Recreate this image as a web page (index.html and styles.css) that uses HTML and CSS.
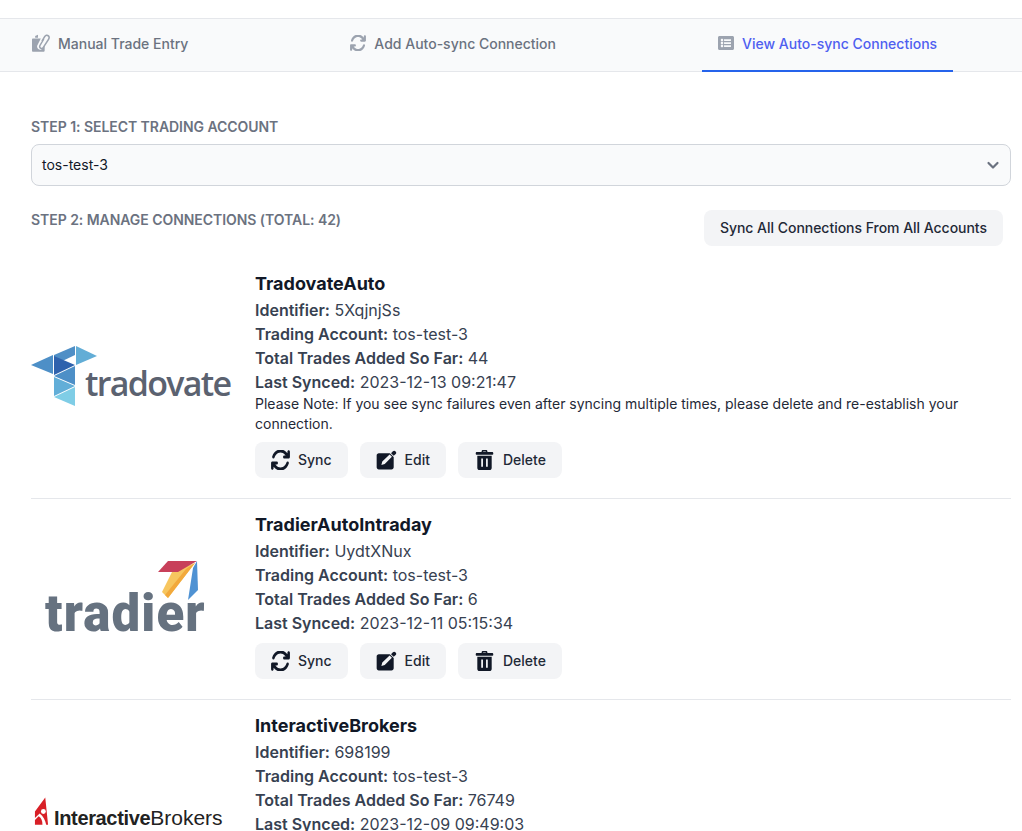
FILE: index.html
```html
<!DOCTYPE html>
<html lang="en">
<head>
    <meta charset="UTF-8">
    <meta name="viewport" content="width=device-width, initial-scale=1.0">
    <title>Auto-sync Connections</title>
    <link rel="stylesheet" href="styles.css">
</head>
<body>
    <svg class="icon-defs" aria-hidden="true">
        <symbol id="i-sync" viewBox="14 44 484 424" preserveAspectRatio="none"><path d="M105.1 202.6c7.7-21.8 20.2-42.3 37.8-59.8c62.5-62.5 163.8-62.5 226.3 0L386.3 160H352c-17.7 0-32 14.3-32 32s14.3 32 32 32H463.5c0 0 0 0 0 0h.4c17.7 0 32-14.3 32-32V80c0-17.7-14.3-32-32-32s-32 14.3-32 32v35.2L414.4 97.6c-87.5-87.5-229.3-87.5-316.8 0C73.2 122 55.6 150.7 44.8 181.4c-5.9 16.7 2.9 34.9 19.5 40.8s34.9-2.9 40.8-19.5zM39 289.3c-5 1.5-9.8 4.2-13.7 8.2c-4 4-6.7 8.8-8.1 14c-.3 1.2-.6 2.5-.8 3.8c-.3 1.7-.4 3.4-.4 5.1V432c0 17.7 14.3 32 32 32s32-14.3 32-32V396.9l17.6 17.5 0 0c87.5 87.4 229.3 87.4 316.7 0c24.4-24.4 42.1-53.1 52.9-83.7c5.9-16.7-2.9-34.9-19.5-40.8s-34.9 2.9-40.8 19.5c-7.7 21.8-20.2 42.3-37.8 59.8c-62.5 62.5-163.8 62.5-226.3 0l-.1-.1L125.6 352H160c17.7 0 32-14.3 32-32s-14.3-32-32-32H48.4c-1.6 0-3.2 .1-4.8 .3s-3.1 .5-4.6 1z"/></symbol>
        <symbol id="i-edit" viewBox="0 0 512 512"><path fill-rule="evenodd" d="M60 80H340L440 180V440C440 470 416 496 384 496H60C28 496 4 470 4 440V136C4 104 28 80 60 80ZM125 385L148 295L335 115L395 175L210 360Z"/><path d="M372 84L420 32C438 14 468 14 490 36C510 56 510 84 492 102L440 150Z"/></symbol>
        <symbol id="i-trash" viewBox="0 0 448 512"><path fill-rule="evenodd" d="M150 30C150 10 170 0 185 0H263C280 0 298 10 298 30V48H420C435 48 448 60 448 76V100C448 112 435 120 420 120H28C12 120 0 112 0 100V76C0 60 12 48 28 48H150ZM190 48H258V36H190Z"/><path fill-rule="evenodd" d="M40 150H408V460C408 490 385 512 355 512H93C63 512 40 490 40 460ZM140 220V430H185V220ZM263 220V430H308V220Z"/></symbol>
        <symbol id="i-list" viewBox="0 0 512 512"><path d="M464 480H48c-26.51 0-48-21.49-48-48V80c0-26.51 21.49-48 48-48h416c26.51 0 48 21.49 48 48v352c0 26.51-21.49 48-48 48zM128 120c-22.091 0-40 17.909-40 40s17.909 40 40 40 40-17.909 40-40-17.909-40-40-40zm0 96c-22.091 0-40 17.909-40 40s17.909 40 40 40 40-17.909 40-40-17.909-40-40-40zm0 96c-22.091 0-40 17.909-40 40s17.909 40 40 40 40-17.909 40-40-17.909-40-40-40zm288-136v-32c0-6.627-5.373-12-12-12H204c-6.627 0-12 5.373-12 12v32c0 6.627 5.373 12 12 12h200c6.627 0 12-5.373 12-12zm0 96v-32c0-6.627-5.373-12-12-12H204c-6.627 0-12 5.373-12 12v32c0 6.627 5.373 12 12 12h200c6.627 0 12-5.373 12-12zm0 96v-32c0-6.627-5.373-12-12-12H204c-6.627 0-12 5.373-12 12v32c0 6.627 5.373 12 12 12h200c6.627 0 12-5.373 12-12z"/></symbol>
        <symbol id="i-manual" viewBox="0 0 512 512"><path d="M30 130H250L150 330C135 360 150 405 180 430C215 462 280 450 310 405L360 320V470C360 490 345 505 325 505H30C12 505 0 490 0 470V165C0 145 12 130 30 130Z"/><path d="M90 60L170 20V110H90Z"/><path d="M345 60C380 0 450 5 490 40C520 75 515 120 490 160L335 400C310 435 265 445 225 420C190 395 190 350 210 315L320 130L355 150L245 335C235 355 240 375 255 385C275 395 295 390 305 370L455 135C470 110 470 90 450 70C425 50 400 50 385 75L300 215L265 195Z"/></symbol>
    </svg>

    <div class="tabs">
        <a class="tab" href="#"><svg class="tab-icon tab-icon-wide"><use href="#i-manual"/></svg>Manual Trade Entry</a>
        <a class="tab" href="#"><svg class="tab-icon"><use href="#i-sync"/></svg>Add Auto-sync Connection</a>
        <a class="tab active" href="#"><svg class="tab-icon"><use href="#i-list"/></svg>View Auto-sync Connections</a>
    </div>

    <div class="container">
        <label class="step-label" for="account">Step 1: Select Trading Account</label>
        <div class="select-box" id="account">
            <span>tos-test-3</span>
            <svg class="chevron" viewBox="0 0 20 20"><path d="M5.5 8l4.5 4.5L14.5 8" fill="none" stroke="#6b7280" stroke-width="2.2" stroke-linecap="round" stroke-linejoin="round"/></svg>
        </div>

        <div class="step-row">
            <h3 class="step-label">Step 2: Manage Connections (Total: 42)</h3>
            <button class="btn btn-all" type="button">Sync All Connections From All Accounts</button>
        </div>

        <div class="connection">
            <div class="logo-col">
                <div class="logo logo-tradovate">
                    <svg class="tradovate-mark" viewBox="0 0 66 60">
                        <polygon points="0,19 22,9 22,28" fill="#4d8fc7"/>
                        <polygon points="23,9 44,0 44,9 23,19" fill="#4f8fc6"/>
                        <polygon points="45,0 66,10 45,19" fill="#62add6"/>
                        <polygon points="23,10 44,19 23,29" fill="#2f62ad"/>
                        <polygon points="44,20 44,39 23,30" fill="#4d8fc7"/>
                        <polygon points="23,31 44,40 23,50" fill="#62aed8"/>
                        <polygon points="44,41 44,60 23,51" fill="#7fcde6"/>
                    </svg>
                    <span class="tradovate-name">tradovate</span>
                </div>
            </div>
            <div class="details">
                <h4>TradovateAuto</h4>
                <p><b>Identifier:</b> 5XqjnjSs</p>
                <p><b>Trading Account:</b> tos-test-3</p>
                <p><b>Total Trades Added So Far:</b> 44</p>
                <p><b>Last Synced:</b> 2023-12-13 09:21:47</p>
                <p class="note">Please Note: If you see sync failures even after syncing multiple times, please delete and re-establish your connection.</p>
                <div class="actions">
                    <button class="btn" type="button"><svg class="btn-icon btn-icon-sync"><use href="#i-sync"/></svg>Sync</button>
                    <button class="btn" type="button"><svg class="btn-icon"><use href="#i-edit"/></svg>Edit</button>
                    <button class="btn" type="button"><svg class="btn-icon"><use href="#i-trash"/></svg>Delete</button>
                </div>
            </div>
        </div>

        <div class="connection">
            <div class="logo-col">
                <div class="logo logo-tradier">
                    <svg class="tradier-mark" viewBox="0 0 41 41">
                        <polygon points="4,32 14,12 37,3 10,38" fill="#f7c65f"/>
                        <polygon points="7,35 10,38 37,3 28,9" fill="#f2a93c"/>
                        <polygon points="0,12 10,1 39,1 20,12" fill="#c8405a"/>
                        <polygon points="39,1 40,30 30,40 35,8" fill="#4f92d3"/>
                    </svg>
                    <span class="tradier-name">tradier</span>
                </div>
            </div>
            <div class="details">
                <h4>TradierAutoIntraday</h4>
                <p><b>Identifier:</b> UydtXNux</p>
                <p><b>Trading Account:</b> tos-test-3</p>
                <p><b>Total Trades Added So Far:</b> 6</p>
                <p><b>Last Synced:</b> 2023-12-11 05:15:34</p>
                <div class="actions">
                    <button class="btn" type="button"><svg class="btn-icon btn-icon-sync"><use href="#i-sync"/></svg>Sync</button>
                    <button class="btn" type="button"><svg class="btn-icon"><use href="#i-edit"/></svg>Edit</button>
                    <button class="btn" type="button"><svg class="btn-icon"><use href="#i-trash"/></svg>Delete</button>
                </div>
            </div>
        </div>

        <div class="connection">
            <div class="logo-col logo-col-low">
                <div class="logo logo-ib">
                    <svg class="ib-mark" viewBox="0 0 16 30">
                        <path d="M12 0L15 29H13C12 24 10 20 6 17L1 22V15Z" fill="#d81f26"/>
                        <path d="M1 24L5 20C8 22 9 25 9 29H1Z" fill="#d81f26"/>
                        <circle cx="10" cy="15" r="2.6" fill="#fff"/>
                    </svg>
                    <span class="ib-name"><b>Interactive</b>Brokers</span>
                </div>
            </div>
            <div class="details">
                <h4>InteractiveBrokers</h4>
                <p><b>Identifier:</b> 698199</p>
                <p><b>Trading Account:</b> tos-test-3</p>
                <p><b>Total Trades Added So Far:</b> 76749</p>
                <p><b>Last Synced:</b> 2023-12-09 09:49:03</p>
            </div>
        </div>
    </div>
</body>
</html>
```

FILE: styles.css
```css
html, body {
    height: 100vh;
    overflow: hidden;
}
body {
    margin: 0;
    padding: 18px 0 0;
    font-family: Inter, "Liberation Sans", sans-serif;
    color: #111827;
    background-color: #fff;
}
.icon-defs {
    display: none;
}

.tabs {
    display: flex;
    gap: 130px;
    padding-left: 16px;
    height: 54px;
    box-sizing: border-box;
    background-color: #f9fafb;
    border-top: 1px solid #e5e7eb;
    border-bottom: 1px solid #e5e7eb;
}
.tab {
    display: flex;
    align-items: center;
    height: 53px;
    padding: 0 16px 3px;
    box-sizing: border-box;
    font-size: 14px;
    font-weight: 500;
    color: #6b7280;
    text-decoration: none;
    border-bottom: 2px solid transparent;
}
.tab.active {
    color: #4f5ff0;
    border-bottom-color: #2563eb;
}
.tab-icon {
    width: 16px;
    height: 16px;
    margin-right: 8px;
    fill: #9ca3af;
}
.tab-icon-wide {
    width: 18px;
    height: 18px;
}

.container {
    padding: 46px 11px 0 31px;
}
.step-label {
    display: block;
    margin: 0;
    font-size: 14px;
    line-height: 17px;
    font-weight: 600;
    letter-spacing: -0.05px;
    color: #6b7280;
    text-transform: uppercase;
}
.select-box {
    display: flex;
    align-items: center;
    justify-content: space-between;
    height: 42px;
    box-sizing: border-box;
    margin-top: 9px;
    padding: 0 7px 0 10px;
    font-size: 14px;
    background-color: #f9fafb;
    border: 1px solid #d1d5db;
    border-radius: 8px;
}
.select-box span {
    margin-bottom: 1px;
}
.chevron {
    width: 20px;
    height: 20px;
}
.step-row {
    display: flex;
    justify-content: space-between;
    align-items: flex-start;
    padding-right: 8px;
    margin-top: 24px;
}
.step-row .step-label {
    margin-top: 1px;
}
.btn {
    display: inline-flex;
    align-items: center;
    height: 36px;
    padding: 0 16px 2px;
    font-family: inherit;
    font-size: 14px;
    font-weight: 500;
    color: #1f2937;
    background-color: #f3f4f6;
    border: none;
    border-radius: 8px;
}
.btn-all {
    letter-spacing: -0.03px;
}
.btn-icon {
    width: 21px;
    height: 20px;
    margin: 2px 8px 0 0;
    fill: #111827;
}
.btn-icon-sync {
    width: 19px;
}

.connection {
    display: flex;
    gap: 24px;
    padding: 12px 0 20px;
    border-bottom: 1px solid #e5e7eb;
}
.step-row + .connection {
    padding-top: 24px;
}
.logo-col {
    display: flex;
    align-items: center;
    width: 200px;
    flex-shrink: 0;
}
.logo-col-low {
    align-items: flex-start;
    padding-top: 85px;
}
.logo {
    position: relative;
    width: 200px;
}
.details {
    flex: 1;
    font-size: 16px;
    line-height: 24px;
    color: #374151;
}
.details h4 {
    margin: 0;
    font-size: 18px;
    line-height: 28px;
    font-weight: 700;
    color: #111827;
}
.details p {
    margin: 0;
}
.details b {
    font-weight: 600;
}
.details .note {
    font-size: 14px;
    line-height: 20px;
    color: #1f2937;
}
.actions {
    display: flex;
    gap: 12px;
    margin-top: 8px;
}

/* logos, drawn from a mark and real text */
.logo-tradovate {
    height: 60px;
    margin-top: 4px;
}
.tradovate-mark {
    position: absolute;
    left: 0;
    top: 0;
    width: 66px;
    height: 60px;
}
.tradovate-name {
    position: absolute;
    left: 54px;
    top: 19px;
    font-family: "Open Sans", sans-serif;
    font-size: 34px;
    line-height: 36px;
    font-weight: 600;
    letter-spacing: -1.7px;
    color: #5b6270;
}
.logo-tradier {
    height: 72px;
    margin-top: 2px;
}
.tradier-mark {
    position: absolute;
    left: 127px;
    top: 0;
    width: 41px;
    height: 41px;
}
.tradier-name {
    position: absolute;
    left: 14px;
    top: 30px;
    font-family: Roboto, sans-serif;
    font-size: 51px;
    line-height: 48px;
    font-weight: 900;
    letter-spacing: 1.1px;
    color: #667280;
}
.logo-ib {
    height: 32px;
}
.ib-mark {
    position: absolute;
    left: 3px;
    top: 0;
    width: 15px;
    height: 29px;
}
.ib-name {
    position: absolute;
    left: 23px;
    top: 8px;
    font-family: "Liberation Sans", sans-serif;
    font-size: 21px;
    line-height: 26px;
    color: #222;
    white-space: nowrap;
}
.ib-name b {
    font-size: 20px;
    font-weight: 700;
    letter-spacing: -0.35px;
}
```
